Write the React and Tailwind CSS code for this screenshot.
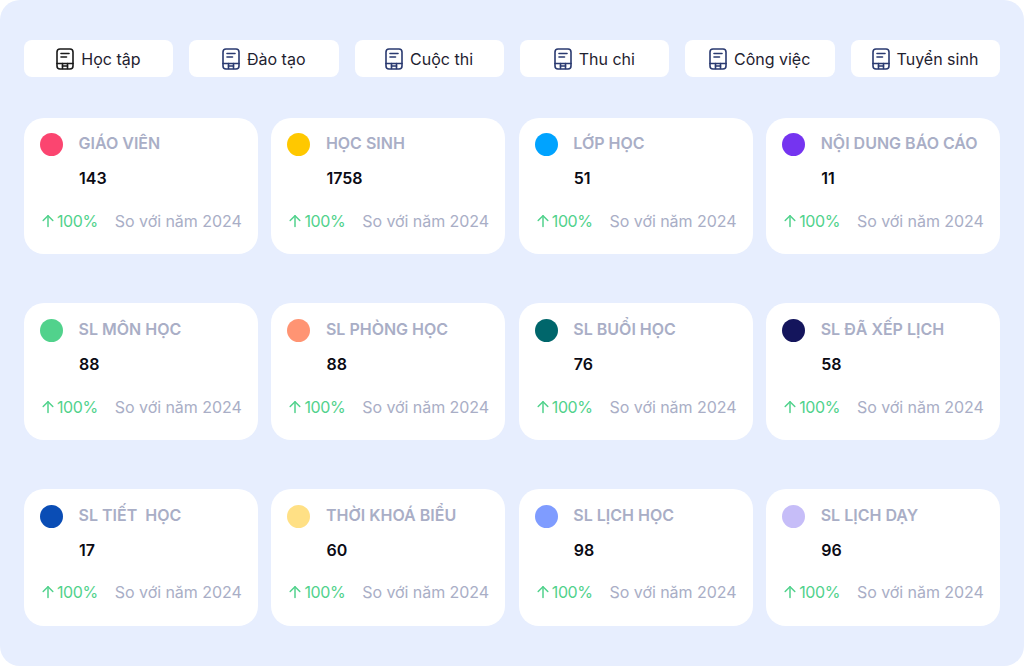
const tabs = [
  { label: "Học tập", color: "#1a1a1a" },
  { label: "Đào tạo", color: "#2a3a70" },
  { label: "Cuộc thi", color: "#2a3a70" },
  { label: "Thu chi", color: "#2a3a70" },
  { label: "Công việc", color: "#2a3a70" },
  { label: "Tuyển sinh", color: "#2a3a70" },
];

const cards = [
  ["GIÁO VIÊN", "143", "bg-[#FB4570]"],
  ["HỌC SINH", "1758", "bg-[#FFC800]"],
  ["LỚP HỌC", "51", "bg-[#00A3FF]"],
  ["NỘI DUNG BÁO CÁO", "11", "bg-[#7534F0]"],
  ["SL MÔN HỌC", "88", "bg-[#51D28C]"],
  ["SL PHÒNG HỌC", "88", "bg-[#FF9473]"],
  ["SL BUỔI HỌC", "76", "bg-[#00666B]"],
  ["SL ĐÃ XẾP LỊCH", "58", "bg-[#14155C]"],
  ["SL TIẾT  HỌC", "17", "bg-[#0A4DB5]"],
  ["THỜI KHOÁ BIỂU", "60", "bg-[#FFE085]"],
  ["SL LỊCH HỌC", "98", "bg-[#7F9CFF]"],
  ["SL LỊCH DẠY", "96", "bg-[#C6BDF8]"],
];

function BookIcon({ color }) {
  return (
    <svg width="20" height="22" viewBox="0 0 20 22" fill="none" stroke={color} strokeWidth="1.6" strokeLinecap="round" strokeLinejoin="round">
      <rect x="2" y="1" width="16" height="20" rx="3" />
      <path d="M2 15.5H18" />
      <path d="M6 5.5H14" />
      <path d="M6 9H11.5" />
      <path d="M7.5 15.5V20.5" />
      <path d="M12.5 15.5V20.5" />
      <path d="M7.5 18H12.5" />
    </svg>
  );
}

function Tab({ label, color }) {
  return (
    <div className="w-[149.4px] h-[37px] bg-white rounded-lg flex items-center justify-center gap-[6px] text-base text-[#1f2230] pr-[1.6px]">
      <BookIcon color={color} />
      <span>{label}</span>
    </div>
  );
}

function Card({ title, value, dot }) {
  return (
    <div className="h-[136.6px] bg-white rounded-[20px] pl-4 pr-4 pt-[14.6px] flex flex-col">
      <div className="flex items-center h-[22px]">
        <div className={`w-[23px] h-[23px] rounded-full shrink-0 mt-[3px] ${dot}`} />
        <div className="ml-[15.5px] text-base font-semibold text-[#A9AEC6] whitespace-pre">{title}</div>
      </div>
      <div className="ml-[39px] mt-[12px] text-base leading-[24px] font-semibold text-[#0b0b14]">{value}</div>
      <div className="flex items-center mt-[18.8px] text-base leading-[24px]">
        <svg className="shrink-0 ml-[1px]" width="14" height="14" viewBox="0 0 14 14" fill="none" stroke="#51D28C" strokeWidth="1.5" strokeLinecap="round" strokeLinejoin="round">
          <path d="M7 12.5V1.8" />
          <path d="M2.2 6.5L7 1.8L11.8 6.5" />
        </svg>
        <span className="text-[#51D28C] ml-[2px] tracking-[-0.4px]">100%</span>
        <span className="text-[#A9AEC6] ml-[17px] whitespace-nowrap tracking-[-0.05px]">So với năm 2024</span>
      </div>
    </div>
  );
}

export default function App() {
  return (
    <div className="w-[1024px] h-[666px] bg-white overflow-hidden" style={{ fontFamily: "Inter, 'Noto Sans', sans-serif" }}>
      <div className="h-full bg-[#E7EEFE] rounded-[20px] px-6 pt-10">
        <div className="flex justify-between">
          {tabs.map((t) => (
            <Tab key={t.label} {...t} />
          ))}
        </div>
        <div className="grid grid-cols-4 gap-x-[13.6px] gap-y-[49px] mt-[40.8px]">
          {cards.map(([title, value, dot]) => (
            <Card key={title} title={title} value={value} dot={dot} />
          ))}
        </div>
      </div>
    </div>
  );
}
